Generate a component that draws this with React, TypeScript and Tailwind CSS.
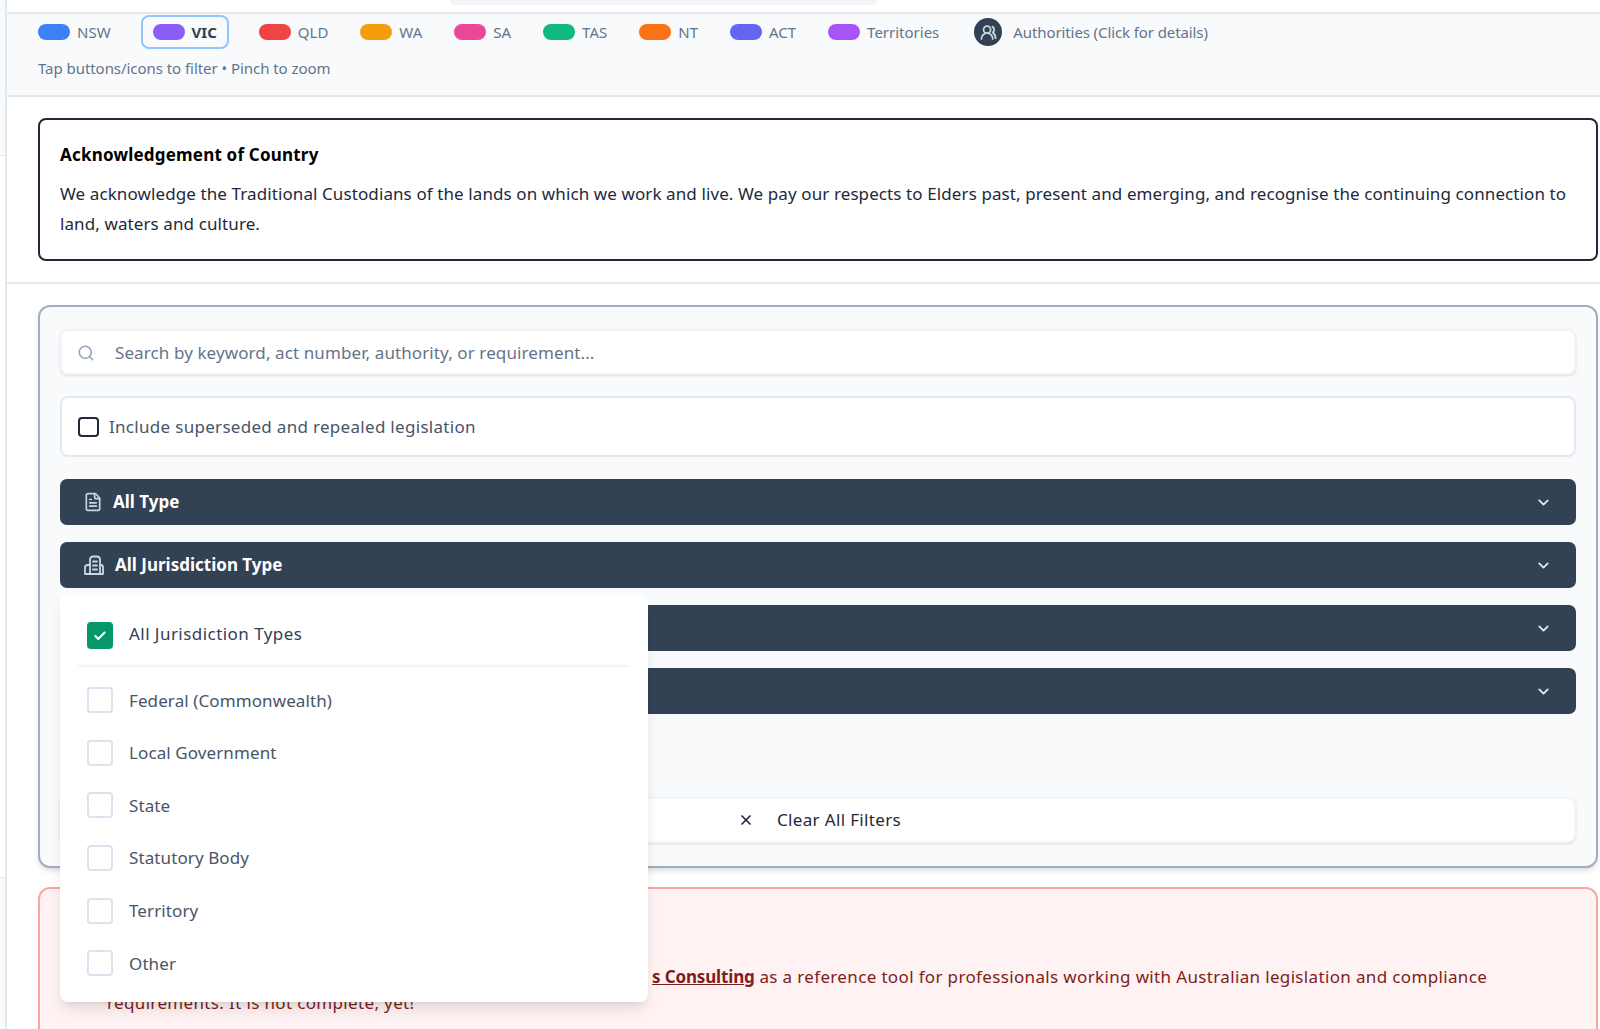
import { Check, ChevronDown, FileText, Search, UsersRound, X } from "lucide-react";

const states = [
  { name: "NSW", color: "bg-[#3b82f6]" },
  { name: "VIC", color: "bg-[#8b5cf6]", active: true },
  { name: "QLD", color: "bg-[#ef4444]" },
  { name: "WA", color: "bg-[#f59e0b]" },
  { name: "SA", color: "bg-[#ec4899]" },
  { name: "TAS", color: "bg-[#10b981]" },
  { name: "NT", color: "bg-[#f97316]" },
  { name: "ACT", color: "bg-[#6366f1]" },
  { name: "Territories", color: "bg-[#a855f7]" },
];

const jurisdictions = ["Federal (Commonwealth)", "Local Government", "State", "Statutory Body", "Territory", "Other"];

const BuildingIcon = () => (
  <svg width="22" height="22" viewBox="0 0 22 22" fill="none" stroke="#cbd5e1" strokeWidth="1.8" strokeLinejoin="round" strokeLinecap="round">
    <path d="M7 20V5.500C7 3.500 8.500 2.500 10.500 2.500h3c2 0 3.500 1 3.500 3V20z" />
    <path d="M7 11H4.500C3 11 2 12 2 13.500V20h5" />
    <path d="M17 11h1c1.500 0 2 1 2 2.500V20h-3" />
    <path d="M10 7.500h4M10 11.500h4M10 15.500h4" />
  </svg>
);

const FilterBar = ({ icon }: { icon?: React.ReactNode }) => (
  <div className="flex h-[46px] items-center justify-between rounded-[7px] bg-[#334155] pl-[23px] pr-[24px] text-white">
    <div className="flex items-center gap-[10px] text-[17px] font-bold">{icon}</div>
    <ChevronDown size={17} strokeWidth={2.5} className="text-[#e2e8f0]" />
  </div>
);

export default function App() {
  return (
    <div className="relative flex h-[1029px] w-[1600px] overflow-hidden bg-white font-['Noto_Sans',sans-serif]">
      <div className="flex w-[7px] shrink-0 flex-col border-r-2 border-[#e2e8f0] bg-[#f8fafc]">
        <div className="h-[156px] border-b border-[#e2e8f0]" />
        <div className="h-[722px] border-b border-[#e2e8f0] bg-white" />
      </div>

      <main className="min-w-0 flex-1">
        <div className="h-3 bg-white">
          <div className="ml-[443px] h-[5px] w-[427px] rounded-b-[16px] bg-[#f3f4f6]" />
        </div>

        <header className="h-[85px] border-y-2 border-[#e2e8f0] bg-[#f8fafc] pl-[31px]">
          <div className="mt-[1px] flex items-center gap-[32px]">
            {states.map((s) =>
              s.active ? (
                <div key={s.name} className="-mx-[2px] flex h-[34px] items-center gap-[7px] rounded-lg border-2 border-[#93c5fd] px-[10px] text-[15px] font-bold text-[#334155]">
                  <span className={`h-4 w-8 rounded-lg ${s.color}`} />
                  {s.name}
                </div>
              ) : (
                <div key={s.name} className="flex h-[34px] items-center gap-[7px] text-[15px] text-[#64748b]">
                  <span className={`h-4 w-8 rounded-lg ${s.color}`} />
                  {s.name}
                </div>
              ),
            )}
            <div className="ml-[3px] flex items-center gap-[11px] text-[15px] tracking-[-0.1px] text-[#64748b]">
              <span className="flex h-7 w-7 items-center justify-center rounded-full bg-[#334155] text-[#cbd5e1]">
                <UsersRound size={17} strokeWidth={2.5} />
              </span>
              Authorities (Click for details)
            </div>
          </div>
          <p className="mt-[8px] text-[15px] tracking-[-0.05px] text-[#64748b]">Tap buttons/icons to filter • Pinch to zoom</p>
        </header>

        <div className="pb-[21px] pl-[31px] pr-[2px] pt-[21px]">
          <section className="h-[143px] rounded-lg border-2 border-[#1f2937] bg-white px-[20px] pt-[22px] text-[17px] tracking-[0.1px] text-[#1e293b]">
            <h2 className="text-[17px] font-bold leading-[26px] tracking-[0.2px] text-black">Acknowledgement of Country</h2>
            <p className="mt-[11px] leading-[30px]">
              We acknowledge the Traditional Custodians of the lands on which we work and live. We pay our respects to Elders past, present and emerging, and recognise the continuing connection to land, waters and culture.
            </p>
          </section>
        </div>

        <div className="border-t-2 border-[#e2e8f0] pl-[31px] pr-[2px] pt-[21px]">
          <section className="h-[563px] rounded-xl border-2 border-[#a0aec0] bg-[#f8fafc] px-[20px] pt-[22px] shadow-md">
            <div className="flex h-[46px] items-center rounded-lg border-2 border-[#f1f5f9] bg-white pl-[15px] pt-[1px] text-[17px] tracking-[0.1px] text-[#64748b] shadow-sm">
              <Search size={18} className="text-[#94a3b8]" />
              <span className="ml-[20px]">Search by keyword, act number, authority, or requirement...</span>
            </div>
            <label className="mt-[21px] flex h-[61px] items-center rounded-lg border-2 border-[#e2e8f0] bg-white pl-[16px] text-[17px] tracking-[0.3px] text-[#475569]">
              <span className="h-[20px] w-[21px] rounded-[4px] border-2 border-[#1f2937]" />
              <span className="ml-[10px]">Include superseded and repealed legislation</span>
            </label>
            <div className="mt-[22px] flex flex-col gap-[17px]">
              <FilterBar icon={<><FileText size={20} className="text-[#cbd5e1]" /><span>All Type</span></>} />
              <FilterBar icon={<><BuildingIcon /><span>All Jurisdiction Type</span></>} />
              <FilterBar />
              <FilterBar />
            </div>
            <div className="mt-[83px] flex h-[46px] items-center justify-center gap-[23px] rounded-lg border-2 border-[#f1f5f9] bg-white pl-[3px] text-[17px] tracking-[0.35px] text-[#1e293b] shadow-sm">
              <X size={16} strokeWidth={2.5} />
              Clear All Filters
            </div>
          </section>

          <section className="mt-[19px] h-[200px] rounded-xl border-2 border-[#fca5a5] bg-[#fef2f2] pl-[67px] pr-[40px] pt-[75px] text-[17px] leading-[26px] tracking-[0.35px] text-[#7f1d1d]">
            <span className="inline-block w-[545px]" />
            <span className="font-bold tracking-[-0.15px] underline">s Consulting</span> as a reference tool for professionals working with Australian legislation and compliance requirements. It is not complete, yet!
          </section>
        </div>
      </main>

      <div className="absolute left-[60px] top-[595px] h-[407px] w-[588px] rounded-lg bg-white px-[18px] pt-[14px] shadow-lg">
        <div className="flex h-[53px] items-center gap-[16px] pl-[9px] text-[17px] tracking-[0.45px] text-[#334155]">
          <span className="flex h-[27px] w-[26px] items-center justify-center rounded-[4px] bg-[#059669] text-white">
            <Check size={14} strokeWidth={3.5} />
          </span>
          <span className="-translate-y-[2px]">All Jurisdiction Types</span>
        </div>
        <div className="mb-[7px] mt-[3px] border-t-2 border-[#f1f5f9]" />
        {jurisdictions.map((item) => (
          <div key={item} className="flex h-[52.6px] items-center gap-[16px] pl-[9px] text-[17px] tracking-[0.1px] text-[#475569]">
            <span className="h-[26px] w-[26px] rounded-[4px] border-2 border-[#dbe3ee]" />
            {item}
          </div>
        ))}
      </div>
    </div>
  );
}
